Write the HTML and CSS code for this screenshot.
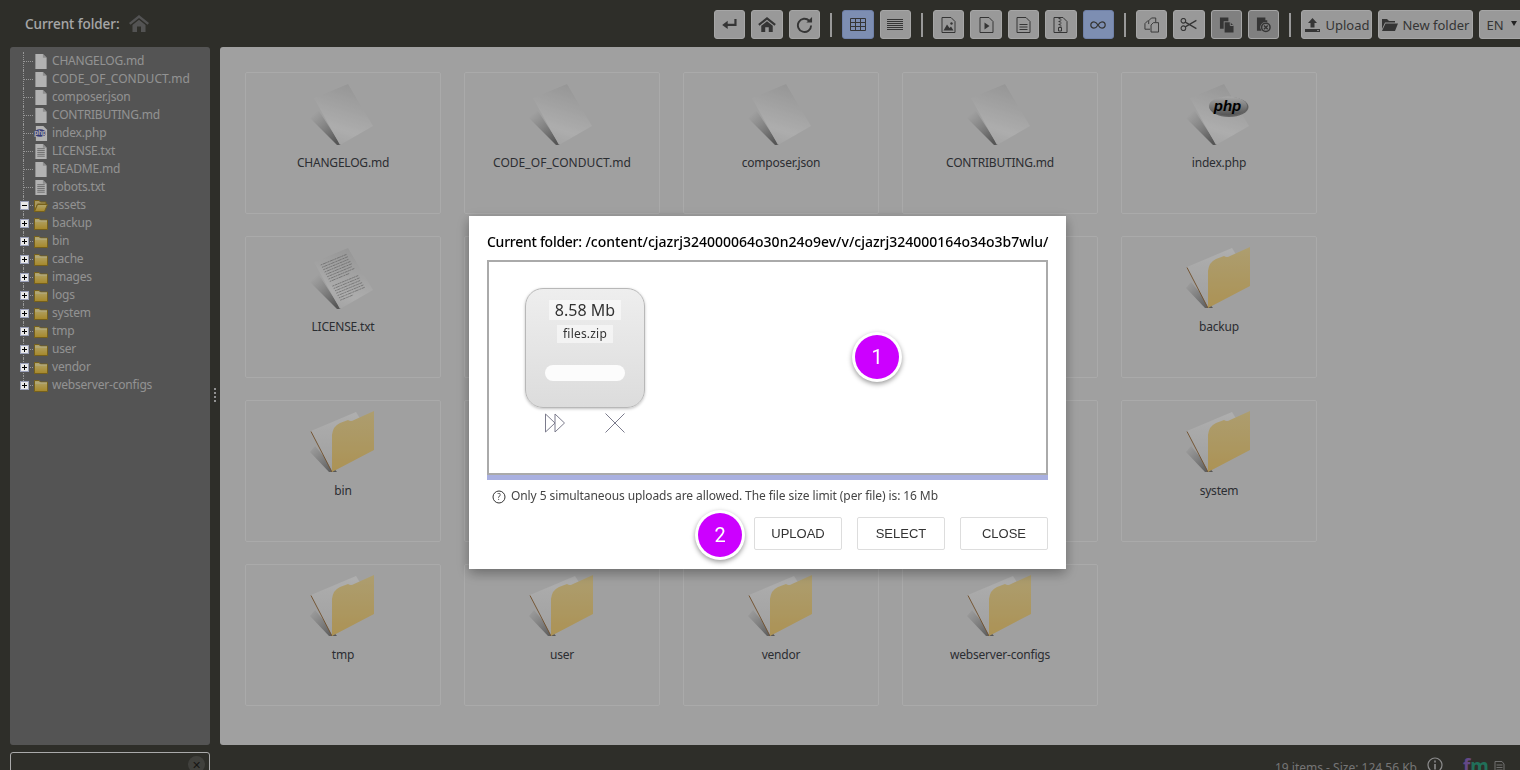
FILE: index.html
```html
<!DOCTYPE html>
<html>

<head>
    <title>File manager</title>
    <link rel="stylesheet" href="styles.css">
</head>

<body>
    <svg class="defs" width="0" height="0">
        <defs>
            <linearGradient id="paper" x1="0.7" y1="0" x2="0.4" y2="1">
                <stop offset="0" stop-color="#d6d6d6" />
                <stop offset="0.75" stop-color="#f8f8f8" />
                <stop offset="1" stop-color="#eaeaea" />
            </linearGradient>
            <linearGradient id="shade" gradientUnits="userSpaceOnUse" x1="68" y1="42" x2="92" y2="70">
                <stop offset="0" stop-color="#666" stop-opacity="0" />
                <stop offset="1" stop-color="#333" stop-opacity="0.6" />
            </linearGradient>
            <linearGradient id="sheet" x1="0" y1="0" x2="0" y2="1">
                <stop offset="0" stop-color="#fafafa" />
                <stop offset="1" stop-color="#e4e4e4" />
            </linearGradient>
            <linearGradient id="tan" x1="0" y1="0" x2="0" y2="1">
                <stop offset="0" stop-color="#f8e2a0" />
                <stop offset="1" stop-color="#f6d27a" />
            </linearGradient>
            <linearGradient id="badge" x1="0" y1="0" x2="0" y2="1">
                <stop offset="0" stop-color="#f0f0f0" />
                <stop offset="1" stop-color="#777" />
            </linearGradient>
            <linearGradient id="gold" x1="0" y1="0" x2="0" y2="1">
                <stop offset="0" stop-color="#ffeea0" />
                <stop offset="1" stop-color="#eec23c" />
            </linearGradient>

            <symbol id="big-file" viewBox="60 6 76 76">
                <polygon points="72,36 65,46 92,73 96,73" fill="url(#shade)" />
                <polygon points="69,26 103,12 128,54 95,73" fill="url(#paper)" />
            </symbol>
            <symbol id="big-text" viewBox="60 6 76 76">
                <polygon points="72,36 65,46 92,73 96,73" fill="url(#shade)" />
                <polygon points="69,26 103,12 128,54 95,73" fill="url(#paper)" />
                <g transform="matrix(.34 -.14 .26 .47 69 26)" stroke="#888" stroke-width="1.300" stroke-dasharray="5 1.500 9 1 3 1">
                    <path d="M12 10H88M12 15H88M12 20H86M12 25H88M12 30H88M12 35H84M12 40H88M12 45H70" />
                    <path d="M12 55H88M12 60H88M12 65H86M12 70H88M12 75H88M12 80H88M12 85H50" />
                </g>
            </symbol>
            <symbol id="big-php" viewBox="60 6 76 76">
                <polygon points="72,36 65,46 92,73 96,73" fill="url(#shade)" />
                <polygon points="69,26 103,12 128,54 95,73" fill="url(#paper)" />
                <ellipse cx="108" cy="35" rx="19.500" ry="10" fill="#333" opacity="0.5" />
                <ellipse cx="107" cy="34" rx="19" ry="9.500" fill="url(#badge)" />
                <text x="106.500" y="39" class="php-big">php</text>
            </symbol>
            <symbol id="big-folder" viewBox="60 6 76 76">
                <polygon points="70,46 65,52 84,72 92,72" fill="url(#shade)" />
                <path d="M66 31 L111 12 L116 20 L87 34 L87 72Z" fill="url(#sheet)" />
                <path d="M66 31.500 L87 72" stroke="#a0703c" stroke-width="0.9" />
                <path d="M87 72 L87 35 Q88 26 95 23 L103 20 Q106 22 109 20 L129 11 L129 50Z" fill="url(#tan)" />
            </symbol>

            <symbol id="t-file" viewBox="0 0 14 16">
                <path d="M1 0H9L13 4V16H1Z" fill="#fff" />
                <path d="M9 0L13 4H9Z" fill="#ccc" />
            </symbol>
            <symbol id="t-text" viewBox="0 0 14 16">
                <path d="M1 0H9L13 4V16H1Z" fill="#fff" />
                <path d="M9 0L13 4H9Z" fill="#ccc" />
                <path d="M3 5H11M3 7H11M3 9H11M3 11H11M3 13H11" stroke="#999" stroke-width="1" />
            </symbol>
            <symbol id="t-php" viewBox="0 0 15 16">
                <path d="M2 0H10L14 4V16H2Z" fill="#fff" />
                <ellipse cx="6.500" cy="7.500" rx="6.500" ry="4" fill="#4a4fa8" />
                <text x="6.500" y="10" class="php-small">php</text>
            </symbol>
            <symbol id="t-folder" viewBox="0 0 14 13">
                <path d="M.5 1.500H5L6.500 3H13.500V12.500H.5Z" fill="url(#gold)" stroke="#a98a28" />
                <path d="M1 4H13" stroke="#fff6c8" />
            </symbol>
            <symbol id="t-open" viewBox="0 0 14 13">
                <path d="M.5 1.500H5L6.500 3H12V5H3.500L.5 12.500Z" fill="#f4dc8c" stroke="#a98a28" />
                <path d="M3.500 5.500H13.500L10.500 12.500H.5Z" fill="url(#gold)" stroke="#a98a28" />
            </symbol>

            <symbol id="i-back" viewBox="0 0 16 12">
                <path d="M14.500 0V6.500H5" fill="none" stroke="currentColor" stroke-width="2.400" />
                <path d="M6 2V11L0 6.500Z" fill="currentColor" />
            </symbol>
            <symbol id="i-home" viewBox="0 0 20 17">
                <path d="M10 0L0 8L1.500 9.800L10 3L18.500 9.800L20 8Z" fill="currentColor" />
                <path d="M3.500 10L10 4.800L16.500 10V17H12V11.500H8V17H3.500Z" fill="currentColor" />
            </symbol>
            <symbol id="i-refresh" viewBox="0 0 18 18">
                <path d="M14 5A7 7 0 1 0 16 10" fill="none" stroke="currentColor" stroke-width="2" />
                <path d="M17 1V7H11Z" fill="currentColor" />
            </symbol>
            <symbol id="i-grid" viewBox="0 0 16 13">
                <path d="M.5.5H15.500V12.500H.5ZM.5 4.500H15.500M.5 8.500H15.500M5.500.5V12.500M10.500.5V12.500" fill="none" stroke="currentColor" />
            </symbol>
            <symbol id="i-list" viewBox="0 0 16 11">
                <path d="M0 .5H16M0 2.500H16M0 4.500H16M0 6.500H16M0 8.500H16M0 10.500H16" stroke="currentColor" />
            </symbol>
            <symbol id="i-image" viewBox="0 0 14 16">
                <path d="M.5.5H9.500L13.500 4.500V15.500H.5Z" fill="none" stroke="currentColor" />
                <path d="M2 13.500L5.500 7.500L8 11L9.500 9.500L12 13.500Z" fill="currentColor" />
                <circle cx="10" cy="6.500" r="1.200" fill="currentColor" />
            </symbol>
            <symbol id="i-video" viewBox="0 0 14 16">
                <path d="M.5.5H9.500L13.500 4.500V15.500H.5Z" fill="none" stroke="currentColor" />
                <path d="M5 5.500L10 9L5 12.500Z" fill="currentColor" />
            </symbol>
            <symbol id="i-doc" viewBox="0 0 14 16">
                <path d="M.5.5H9.500L13.500 4.500V15.500H.5Z" fill="none" stroke="currentColor" />
                <path d="M3 7.500H11M3 10H11M3 12.500H11" stroke="currentColor" />
            </symbol>
            <symbol id="i-zip" viewBox="0 0 14 16">
                <path d="M.5.5H9.500L13.500 4.500V15.500H.5Z" fill="none" stroke="currentColor" />
                <path d="M5 1H7V2H5ZM6 2.500H8V3.500H6ZM5 4H7V5H5ZM6 5.500H8V6.500H6ZM5 7H7V8H5ZM6 8.500H8V9.500H6Z" fill="currentColor" />
                <path d="M5 10.500H8V14H5Z" fill="none" stroke="currentColor" />
            </symbol>
            <symbol id="i-inf" viewBox="0 0 16 8">
                <path d="M8 4C6.500 1.500 5.500.8 4 .8A3.200 3.200 0 0 0 4 7.200C5.500 7.200 6.500 6.500 8 4C9.500 1.500 10.500.8 12 .8A3.200 3.200 0 0 1 12 7.200C10.500 7.200 9.500 6.500 8 4Z" fill="none" stroke="currentColor" stroke-width="1.300" />
            </symbol>
            <symbol id="i-copy" viewBox="0 0 16 16">
                <path d="M4.500 3L1 6.500V12.500H6.500" fill="none" stroke="currentColor" />
                <path d="M5 7V3.500L8 .5H12.500V5" fill="none" stroke="currentColor" />
                <path d="M7.500 8L10 5.500H15.500V15.500H7.500Z" fill="none" stroke="currentColor" />
            </symbol>
            <symbol id="i-cut" viewBox="0 0 18 14">
                <circle cx="3.500" cy="3" r="2.500" fill="none" stroke="currentColor" stroke-width="1.200" />
                <circle cx="3.500" cy="11" r="2.500" fill="none" stroke="currentColor" stroke-width="1.200" />
                <path d="M5.500 4.500L17.500 11.500M5.500 9.500L17.500 2.500" stroke="currentColor" stroke-width="1.400" />
            </symbol>
            <symbol id="i-paste" viewBox="0 0 16 16">
                <path d="M1 0H10V4H5V12H1Z" fill="currentColor" />
                <path d="M6 5H12L15.500 8.500V16H6Z" fill="currentColor" />
                <path d="M12 5V8.500H15.500" fill="none" stroke="#c8c8c8" />
            </symbol>
            <symbol id="i-delete" viewBox="0 0 16 16">
                <path d="M1 0H10V3H12V5.200A5.500 5.500 0 0 0 6 14H1Z" fill="currentColor" />
                <circle cx="10.500" cy="10.500" r="4.500" fill="none" stroke="currentColor" stroke-width="1.600" />
                <path d="M8.500 8.500L12.500 12.500M12.500 8.500L8.500 12.500" stroke="currentColor" stroke-width="1.600" />
            </symbol>
            <symbol id="i-upload" viewBox="0 0 15 14">
                <path d="M7.500 0L12 5H9.500V9.500H5.500V5H3Z" fill="currentColor" />
                <path d="M0 11H15V14H0Z" fill="currentColor" />
                <path d="M12 12.500H14" stroke="#bbb" />
            </symbol>
            <symbol id="i-folder" viewBox="0 0 16 12">
                <path d="M0 0H5L7 2H13V3.500H3L0 10Z" fill="currentColor" />
                <path d="M3.500 4.500H16L13 12H0Z" fill="currentColor" />
            </symbol>
        </defs>
    </svg>

    <div class="page">
        <div class="topbar">
            <div class="crumb">
                <span class="crumb-label">Current folder:</span>
                <svg class="crumb-home"><use href="#i-home" /></svg>
            </div>
            <div class="toolbar">
                <button class="tool"><svg class="ico ico-s"><use href="#i-back" /></svg></button>
                <button class="tool"><svg class="ico ico-m"><use href="#i-home" /></svg></button>
                <button class="tool"><svg class="ico ico-r"><use href="#i-refresh" /></svg></button>
                <span class="sep"></span>
                <button class="tool on"><svg class="ico ico-g"><use href="#i-grid" /></svg></button>
                <button class="tool"><svg class="ico ico-l"><use href="#i-list" /></svg></button>
                <span class="sep"></span>
                <button class="tool"><svg class="ico ico-f"><use href="#i-image" /></svg></button>
                <button class="tool"><svg class="ico ico-f"><use href="#i-video" /></svg></button>
                <button class="tool"><svg class="ico ico-f"><use href="#i-doc" /></svg></button>
                <button class="tool"><svg class="ico ico-f"><use href="#i-zip" /></svg></button>
                <button class="tool on"><svg class="ico ico-i"><use href="#i-inf" /></svg></button>
                <span class="sep"></span>
                <button class="tool"><svg class="ico ico-f"><use href="#i-copy" /></svg></button>
                <button class="tool"><svg class="ico ico-c"><use href="#i-cut" /></svg></button>
                <button class="tool off"><svg class="ico ico-f"><use href="#i-paste" /></svg></button>
                <button class="tool off"><svg class="ico ico-f"><use href="#i-delete" /></svg></button>
                <span class="sep"></span>
                <button class="tool wide upload"><svg class="ico ico-u"><use href="#i-upload" /></svg>Upload</button>
                <button class="tool wide newdir"><svg class="ico ico-n"><use href="#i-folder" /></svg>New folder</button>
                <button class="tool lang">EN<span class="caret"></span></button>
            </div>
        </div>

        <div class="middle">
            <div class="tree">
                <div class="row"><span class="branch"></span><svg class="t-ico"><use href="#t-file" /></svg>CHANGELOG.md</div>
                <div class="row caps"><span class="branch"></span><svg class="t-ico"><use href="#t-file" /></svg>CODE_OF_CONDUCT.md</div>
                <div class="row"><span class="branch"></span><svg class="t-ico"><use href="#t-file" /></svg>composer.json</div>
                <div class="row"><span class="branch"></span><svg class="t-ico"><use href="#t-file" /></svg>CONTRIBUTING.md</div>
                <div class="row"><span class="branch"></span><svg class="t-ico"><use href="#t-php" /></svg>index.php</div>
                <div class="row"><span class="branch"></span><svg class="t-ico"><use href="#t-text" /></svg>LICENSE.txt</div>
                <div class="row"><span class="branch"></span><svg class="t-ico"><use href="#t-file" /></svg>README.md</div>
                <div class="row"><span class="branch"></span><svg class="t-ico"><use href="#t-text" /></svg>robots.txt</div>
                <div class="row"><span class="branch"><i class="toggle minus"></i></span><svg class="t-ico"><use href="#t-open" /></svg>assets</div>
                <div class="row"><span class="branch"><i class="toggle"></i></span><svg class="t-ico"><use href="#t-folder" /></svg>backup</div>
                <div class="row"><span class="branch"><i class="toggle"></i></span><svg class="t-ico"><use href="#t-folder" /></svg>bin</div>
                <div class="row"><span class="branch"><i class="toggle"></i></span><svg class="t-ico"><use href="#t-folder" /></svg>cache</div>
                <div class="row"><span class="branch"><i class="toggle"></i></span><svg class="t-ico"><use href="#t-folder" /></svg>images</div>
                <div class="row"><span class="branch"><i class="toggle"></i></span><svg class="t-ico"><use href="#t-folder" /></svg>logs</div>
                <div class="row"><span class="branch"><i class="toggle"></i></span><svg class="t-ico"><use href="#t-folder" /></svg>system</div>
                <div class="row"><span class="branch"><i class="toggle"></i></span><svg class="t-ico"><use href="#t-folder" /></svg>tmp</div>
                <div class="row"><span class="branch"><i class="toggle"></i></span><svg class="t-ico"><use href="#t-folder" /></svg>user</div>
                <div class="row"><span class="branch"><i class="toggle"></i></span><svg class="t-ico"><use href="#t-folder" /></svg>vendor</div>
                <div class="row"><span class="branch last"><i class="toggle"></i></span><svg class="t-ico"><use href="#t-folder" /></svg>webserver-configs</div>
            </div>
            <div class="splitter"><span class="grip"></span></div>
            <div class="files">
                <div class="item"><svg class="big"><use href="#big-file" /></svg><span>CHANGELOG.md</span></div>
                <div class="item caps"><svg class="big"><use href="#big-file" /></svg><span>CODE_OF_CONDUCT.md</span></div>
                <div class="item"><svg class="big"><use href="#big-file" /></svg><span>composer.json</span></div>
                <div class="item"><svg class="big"><use href="#big-file" /></svg><span>CONTRIBUTING.md</span></div>
                <div class="item"><svg class="big"><use href="#big-php" /></svg><span>index.php</span></div>
                <div class="item"><svg class="big"><use href="#big-text" /></svg><span>LICENSE.txt</span></div>
                <div class="item"><svg class="big"><use href="#big-file" /></svg><span>README.md</span></div>
                <div class="item"><svg class="big"><use href="#big-text" /></svg><span>robots.txt</span></div>
                <div class="item"><svg class="big"><use href="#big-folder" /></svg><span>assets</span></div>
                <div class="item"><svg class="big"><use href="#big-folder" /></svg><span>backup</span></div>
                <div class="item"><svg class="big"><use href="#big-folder" /></svg><span>bin</span></div>
                <div class="item"><svg class="big"><use href="#big-folder" /></svg><span>cache</span></div>
                <div class="item"><svg class="big"><use href="#big-folder" /></svg><span>images</span></div>
                <div class="item"><svg class="big"><use href="#big-folder" /></svg><span>logs</span></div>
                <div class="item"><svg class="big"><use href="#big-folder" /></svg><span>system</span></div>
                <div class="item"><svg class="big"><use href="#big-folder" /></svg><span>tmp</span></div>
                <div class="item"><svg class="big"><use href="#big-folder" /></svg><span>user</span></div>
                <div class="item"><svg class="big"><use href="#big-folder" /></svg><span>vendor</span></div>
                <div class="item"><svg class="big"><use href="#big-folder" /></svg><span>webserver-configs</span></div>
            </div>
        </div>

        <div class="bottombar">
            <div class="search"><span class="clear">&#10005;</span></div>
            <div class="stats">
                <span class="stats-text">19 items - Size: 124.56 Kb</span>
                <svg class="info" viewBox="0 0 16 16">
                    <circle cx="8" cy="8" r="7" fill="none" stroke="currentColor" stroke-width="1.200" />
                    <path d="M8 3.500V5.500M8 7V12.500" stroke="currentColor" stroke-width="1.600" />
                </svg>
                <span class="logo"><b class="logo-f">f</b><b class="logo-m">m</b></span>
                <svg class="logo-doc" viewBox="0 0 10 14">
                    <path d="M.5.5H7.500L9.500 3V13.500H.5ZM2 4H8M2 6.500H8M2 9H8M2 11.500H8" fill="none" stroke="currentColor" />
                </svg>
            </div>
        </div>
    </div>

    <div class="overlay"></div>

    <div class="modal">
        <div class="modal-title"><span class="modal-label">Current folder:</span> /content/cjazrj324000064o30n24o9ev/v/cjazrj324000164o34o3b7wlu/</div>
        <div class="dropzone">
            <div class="drop-inner">
                <div class="upload-item">
                    <div class="card">
                        <span class="card-size">8.58 Mb</span>
                        <span class="card-name">files.zip</span>
                        <span class="card-bar"></span>
                    </div>
                    <div class="card-actions">
                        <svg class="act" viewBox="0 0 20 20">
                            <path d="M.5 1V19L10 10ZM10 1V19L19.500 10Z" fill="none" stroke="#7b7b8c" />
                        </svg>
                        <svg class="act" viewBox="0 0 20 20">
                            <path d="M.5.5L19.500 19.500M19.500.5L.5 19.500" fill="none" stroke="#7b7b8c" />
                        </svg>
                    </div>
                </div>
            </div>
            <div class="drop-progress"></div>
        </div>
        <div class="modal-note">
            <svg class="help" viewBox="0 0 14 14">
                <circle cx="7" cy="7" r="6" fill="none" stroke="#333" />
                <text x="7" y="10" class="help-mark">?</text>
            </svg>
            Only 5 simultaneous uploads are allowed. The file size limit (per file) is: 16 Mb
        </div>
        <div class="modal-buttons">
            <button class="btn">UPLOAD</button>
            <button class="btn">SELECT</button>
            <button class="btn">CLOSE</button>
        </div>
        <span class="pin pin-one">1</span>
        <span class="pin pin-two">2</span>
    </div>
</body>

</html>
```

FILE: styles.css
```css
* {
    box-sizing: border-box;
}

html,
body {
    height: 100%;
    margin: 0;
    overflow: hidden;
}

body {
    font-family: "Noto Sans", sans-serif;
    font-size: 12px;
    background-color: #42423c;
}

.defs {
    position: absolute;
}

.page {
    display: flex;
    flex-direction: column;
    height: 770px;
    overflow: hidden;
}

.overlay {
    position: fixed;
    top: 0;
    right: 0;
    bottom: 0;
    left: 0;
    background-color: rgba(0, 0, 0, 0.3);
}

/* top bar */
.topbar {
    display: flex;
    align-items: flex-start;
    height: 47px;
    flex-shrink: 0;
}

.crumb {
    display: flex;
    align-items: center;
    width: 714px;
    flex-shrink: 0;
    height: 47px;
    padding-left: 25px;
    color: #f0f0f0;
    font-size: 13.5px;
    font-weight: 500;
    letter-spacing: -0.05px;
}

.crumb-home {
    width: 20px;
    height: 17px;
    margin-left: 9px;
    color: #787878;
}

.toolbar {
    display: flex;
    align-items: center;
    flex-shrink: 0;
    gap: 6px;
    height: 29px;
    margin-top: 10px;
}

.tool {
    display: flex;
    align-items: center;
    justify-content: center;
    width: 31.4px;
    height: 29px;
    padding: 0;
    color: #4c4c4c;
    font-family: "Noto Sans", sans-serif;
    font-size: 13px;
    background-color: #dcdcdc;
    border: 1px solid #eeeeee;
    border-radius: 3px;
}

.tool.on {
    background-color: #b3ccff;
    border-color: #a0b8f0;
}

.tool.off {
    background-color: #b8b8b8;
}

.tool.wide {
    justify-content: flex-start;
    gap: 5px;
    padding-left: 3px;
}

.tool.upload {
    width: 71px;
}

.tool.newdir {
    width: 95px;
    gap: 4px;
}

.tool.lang {
    justify-content: flex-start;
    width: 48px;
    padding-left: 6px;
}

.caret {
    width: 0;
    height: 0;
    margin-left: 7px;
    margin-top: -3px;
    border-left: 3px solid transparent;
    border-right: 3px solid transparent;
    border-top: 5px solid #333;
}

.sep {
    width: 2px;
    height: 24px;
    margin: 0 4px;
    background-color: #dcdcdc;
}

.ico {
    display: block;
    flex-shrink: 0;
}

.ico-s { width: 15px; height: 11px; }
.ico-m { width: 18px; height: 15px; }
.ico-r { width: 17px; height: 17px; }
.ico-g { width: 16px; height: 13px; }
.ico-l { width: 16px; height: 11px; }
.ico-f { width: 15px; height: 16px; }
.ico-i { width: 16px; height: 8px; }
.ico-c { width: 17px; height: 13px; }
.ico-u { width: 15px; height: 14px; }
.ico-n { width: 16px; height: 12px; }

/* middle */
.middle {
    display: flex;
    height: 698px;
    flex-shrink: 0;
}

.tree {
    width: 200px;
    margin-left: 10px;
    padding-top: 5px;
    color: #d2d2d2;
    background-color: #797979;
    border-radius: 3px;
}

.row {
    display: flex;
    align-items: center;
    height: 18px;
    line-height: 18px;
    letter-spacing: -0.2px;
}

.row.caps {
    letter-spacing: 0.05px;
}

.branch {
    position: relative;
    width: 11px;
    height: 18px;
    margin-left: 13px;
    flex-shrink: 0;
    border-left: 1px dotted #d8d8d8;
}

.branch::after {
    content: "";
    position: absolute;
    top: 9px;
    left: 0;
    width: 9px;
    border-top: 1px dotted #d8d8d8;
}

.branch.last {
    height: 9px;
    align-self: flex-start;
}

.toggle {
    position: absolute;
    z-index: 1;
    top: 5px;
    left: -4px;
    width: 9px;
    height: 9px;
    background-color: #e8e8e8;
    border: 1px solid #9aa0b8;
}

.toggle::before {
    content: "";
    position: absolute;
    top: 3px;
    left: 1px;
    width: 5px;
    height: 1px;
    background-color: #000;
}

.toggle::after {
    content: "";
    position: absolute;
    top: 1px;
    left: 3px;
    width: 1px;
    height: 5px;
    background-color: #000;
}

.toggle.minus::after {
    display: none;
}

.t-ico {
    width: 14px;
    height: 15px;
    margin-right: 4px;
    flex-shrink: 0;
}

.splitter {
    display: flex;
    align-items: center;
    justify-content: center;
    width: 10px;
    flex-shrink: 0;
}

.grip {
    width: 2px;
    height: 14px;
    margin-top: -2px;
    border-left: 2px dotted #d0d0d0;
}

.files {
    display: flex;
    flex-wrap: wrap;
    align-content: flex-start;
    gap: 22px 23px;
    width: 1300px;
    padding: 25px;
    background-color: #e6e6e6;
    border-radius: 3px 0 0 3px;
}

.item {
    display: flex;
    flex-direction: column;
    align-items: center;
    width: 196px;
    height: 142px;
    padding-top: 5px;
    color: #3e4248;
    border: 1px solid #f4f4f4;
    border-radius: 2px;
}

.big {
    width: 76px;
    height: 76px;
    flex-shrink: 0;
}

.item span {
    line-height: 18px;
    letter-spacing: -0.2px;
}

.item.caps span {
    letter-spacing: 0.05px;
}

.php-big {
    font-family: "Liberation Sans", sans-serif;
    font-size: 15px;
    font-style: italic;
    font-weight: bold;
    text-anchor: middle;
    fill: #000;
}

.php-small {
    font-family: "Liberation Sans", sans-serif;
    font-size: 7px;
    font-weight: bold;
    text-anchor: middle;
    fill: #fff;
}

/* bottom bar */
.bottombar {
    display: flex;
    justify-content: space-between;
    flex-shrink: 0;
    height: 25px;
    padding: 7px 15px 0 10px;
}

.search {
    position: relative;
    width: 200px;
    height: 30px;
    border: 1px solid #f4f4f4;
    border-radius: 3px;
}

.clear {
    position: absolute;
    top: 3px;
    right: 4px;
    width: 17px;
    height: 17px;
    color: #22221e;
    font-size: 11px;
    line-height: 17px;
    text-align: center;
    background-color: #5c5c56;
    border-radius: 50%;
}

.stats {
    display: flex;
    align-items: flex-start;
    color: #a8a8a8;
}

.stats-text {
    margin-top: 7px;
    line-height: 18px;
}

.info {
    width: 16px;
    height: 16px;
    margin: 5px 0 0 10px;
    color: #c8c8c8;
}

.logo {
    display: flex;
    width: 26px;
    margin: 5px 0 0 20px;
    font-size: 19px;
    line-height: 18px;
}

.logo-f {
    color: #9068c0;
}

.logo-m {
    color: #30a080;
}

.logo-doc {
    width: 11px;
    height: 14px;
    margin: 9px 0 0 5px;
    color: #a0a0a0;
}

/* upload modal */
.modal {
    position: fixed;
    top: 216px;
    left: 469px;
    width: 597px;
    height: 353px;
    padding: 15px 18px 0;
    background-color: #fff;
    box-shadow: 0 4px 12px rgba(0, 0, 0, 0.35);
}

.modal-title {
    color: #000;
    font-size: 14px;
    font-weight: 500;
    line-height: 21px;
    white-space: nowrap;
}

.modal-label {
    letter-spacing: -0.27px;
}

.dropzone {
    display: flex;
    flex-direction: column;
    height: 220px;
    margin-top: 8px;
}

.drop-inner {
    flex: 1;
    padding: 26px 36px;
    border: 2px solid #aaaaaa;
}

.upload-item {
    width: 120px;
}

.card {
    display: flex;
    flex-direction: column;
    align-items: center;
    height: 120px;
    padding-top: 11px;
    background: linear-gradient(#eeeeee, #dcdcdc);
    border: 1px solid #b8b8b8;
    border-radius: 18px;
    box-shadow: 0 1px 3px rgba(0, 0, 0, 0.25);
}

.card-size {
    padding: 0 6px;
    color: #333;
    font-size: 16px;
    line-height: 20px;
    background-color: rgba(255, 255, 255, 0.5);
}

.card-name {
    margin-top: 5px;
    padding: 0 6px;
    color: #333;
    line-height: 18px;
    letter-spacing: 0.2px;
    background-color: rgba(255, 255, 255, 0.5);
}

.card-bar {
    width: 80px;
    height: 16px;
    margin-top: 22px;
    background-color: #fcfcfc;
    border-radius: 8px;
}

.card-actions {
    display: flex;
    justify-content: space-between;
    margin-top: 5px;
    padding: 0 20px;
}

.act {
    width: 20px;
    height: 20px;
}

.drop-progress {
    height: 5px;
    flex-shrink: 0;
    background-color: #a9b0e0;
}

.modal-note {
    display: flex;
    align-items: center;
    gap: 5px;
    margin-top: 7px;
    padding-left: 5px;
    color: #444;
    font-size: 12px;
    line-height: 18px;
    letter-spacing: -0.09px;
}

.help {
    width: 14px;
    height: 14px;
    margin-top: 2px;
}

.help-mark {
    font-family: "Noto Sans", sans-serif;
    font-size: 8px;
    text-anchor: middle;
    fill: #333;
}

.modal-buttons {
    display: flex;
    justify-content: flex-end;
    gap: 15px;
    margin-top: 12px;
}

.btn {
    width: 88px;
    height: 33px;
    padding: 0;
    color: #333;
    font-family: "Liberation Sans", sans-serif;
    font-size: 13px;
    background-color: #fff;
    border: 1px solid #dddddd;
    border-radius: 2px;
}

.pin {
    position: absolute;
    width: 44px;
    height: 44px;
    color: #fff;
    font-family: Roboto, sans-serif;
    font-size: 20px;
    line-height: 44px;
    text-align: center;
    background-color: #cc00ff;
    border-radius: 50%;
    box-shadow: 0 0 0 3px #fff, 0 2px 5px 3px rgba(0, 0, 0, 0.4);
}

.pin-one {
    top: 119px;
    left: 386px;
}

.pin-two {
    top: 297px;
    left: 229px;
}
```
